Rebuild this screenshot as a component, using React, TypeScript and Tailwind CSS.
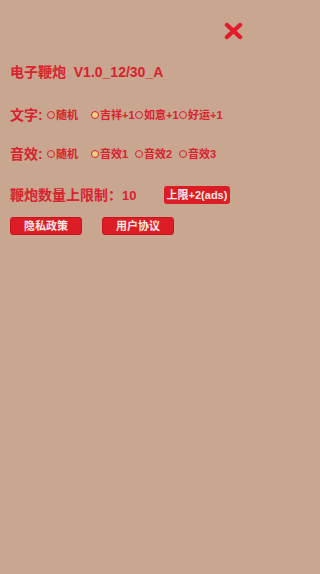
import { useState } from "react";

const textOpts = ["随机", "吉祥+1", "如意+1", "好运+1"];
const soundOpts = ["随机", "音效1", "音效2", "音效3"];

function Radio({ label, on, onPick }: { label: string; on: boolean; onPick: () => void }) {
  return (
    <button type="button" onClick={onPick} className="flex w-[44px] items-center text-[11px] font-bold text-[#d8222e]">
      <span
        className={`h-[8px] w-[8px] shrink-0 rounded-full border-[1.5px] border-[#d8222e] ${on ? "bg-[#f3cf86]" : "bg-transparent"}`}
      />
      <span className="ml-[1px] whitespace-nowrap leading-none">{label}</span>
    </button>
  );
}

export default function App() {
  const [text, setText] = useState(1);
  const [sound, setSound] = useState(1);
  const [limit, setLimit] = useState(10);

  return (
    <div className="min-h-[574px] w-full bg-[#c9a68f]">
      <main
        className="flex w-[265px] flex-col pl-[10px] pt-[22px] text-[#d8222e]"
        style={{ fontFamily: '"Liberation Sans", "Noto Sans CJK SC", sans-serif' }}
      >
        <div className="flex justify-end pr-[22px]">
          <button type="button" title="close">
            <svg width="19" height="18" viewBox="0 0 19 18">
              <path d="M3 3 L16 15 M16 3 L3 15" stroke="#e31b2a" strokeWidth="4.4" strokeLinecap="round" />
            </svg>
          </button>
        </div>

        <h1 className="mt-[22px] h-[20px] whitespace-pre text-[14px] font-bold leading-[20px]">
          电子鞭炮  V1.0_12/30_A
        </h1>

        <div className="mt-[23px] flex h-[20px] items-center">
          <span className="w-[37px] text-[14px] font-bold">文字:</span>
          {textOpts.map((t, i) => (
            <Radio key={t} label={t} on={text === i} onPick={() => setText(i)} />
          ))}
        </div>

        <div className="mt-[19px] flex h-[20px] items-center">
          <span className="w-[37px] text-[14px] font-bold">音效:</span>
          {soundOpts.map((t, i) => (
            <Radio key={t} label={t} on={sound === i} onPick={() => setSound(i)} />
          ))}
        </div>

        <div className="mt-[21px] flex h-[20px] items-center">
          <span className="w-[154px] whitespace-nowrap text-[14px] font-bold">
            鞭炮数量上限制：<span className="text-[13px]">{limit}</span>
          </span>
          <button
            type="button"
            onClick={() => setLimit(limit + 2)}
            className="flex h-[18px] w-[66px] items-center justify-center rounded-[3px] bg-[#dd1d26] text-[11px] font-bold text-[#fbeae4]"
          >
            上限+2(ads)
          </button>
        </div>

        <div className="mt-[12px] flex gap-[20px]">
          <button
            type="button"
            className="flex h-[18px] w-[72px] items-center justify-center rounded-[3px] border border-[#c8141d] bg-[#dd1d26] text-[11px] font-bold text-[#fbeae4]"
          >
            隐私政策
          </button>
          <button
            type="button"
            className="flex h-[18px] w-[72px] items-center justify-center rounded-[3px] border border-[#c8141d] bg-[#dd1d26] text-[11px] font-bold text-[#fbeae4]"
          >
            用户协议
          </button>
        </div>
      </main>
    </div>
  );
}
